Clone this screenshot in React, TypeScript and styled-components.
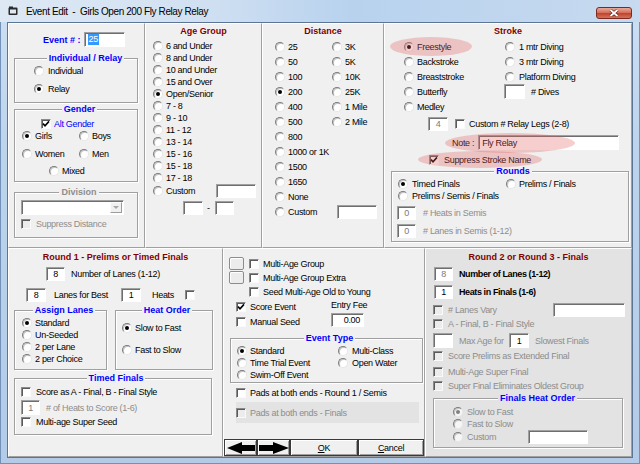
import React from "react";
import styled, { createGlobalStyle } from "styled-components";

const GlobalStyle = createGlobalStyle`
  html, body { margin: 0; padding: 0; background: #fff; }
  #root { width: 640px; height: 464px; }
`;

const FACE = "#f0f0f0";
const MUTED = "#8d8d8d";
const MAROON = "#800000";
const BLUE = "#0000ff";
const GREY_PANEL = "#e3e3e3";

const Shell = styled.div`
  width: 640px;
  height: 464px;
  box-sizing: border-box;
  display: flex;
  flex-direction: column;
  overflow: hidden;
  font-family: "Liberation Sans", Arial, sans-serif;
  font-size: 9px;
  letter-spacing: -0.3px;
  color: #000;
  background: linear-gradient(180deg, #cddff2 0%, #bcd3ec 35%, #b3cbe7 100%);
  box-shadow: inset 0 0 0 1px #7191b8;
`;

const TitleBar = styled.div`
  height: 22px;
  flex: none;
  display: flex;
  align-items: center;
  padding: 0 8px;
  background: linear-gradient(90deg, #dde8f4 0%, #d2e1f2 30%, #b8d2ee 55%, #c7daef 100%);
`;

const TitleText = styled.span`
  margin-left: 8px;
  font-size: 10px;
  letter-spacing: -0.4px;
  white-space: pre;
`;

const CloseButton = styled.div`
  margin-left: auto;
  align-self: flex-start;
  margin-top: 7px;
  width: 36px;
  height: 12px;
  box-sizing: border-box;
  border: 1px solid #7a2a20;
  border-radius: 3px;
  background: linear-gradient(180deg, #eaa99b 0%, #d5725d 45%, #c3442d 55%, #d3735b 100%);
  display: flex;
  align-items: center;
  justify-content: center;
`;

const FrameBody = styled.div`
  flex: 1;
  min-height: 0;
  display: flex;
  padding: 0 7px 6px;
`;

const Client = styled.div`
  flex: 1;
  min-width: 0;
  display: grid;
  grid-template-rows: 225px 1fr;
  border: 1px solid #5b7596;
  background: ${FACE};
`;

const Row = styled.div<{ $cols: string }>`
  display: grid;
  grid-template-columns: ${(p) => p.$cols};
  min-height: 0;
`;

const Panel = styled.div<{ $bg?: string }>`
  position: relative;
  box-sizing: border-box;
  min-width: 0;
  overflow: hidden;
  display: flex;
  flex-direction: column;
  border: 1px solid;
  border-color: #fff #a0a0a0 #a0a0a0 #fff;
  background: ${(p) => p.$bg ?? FACE};
`;

const PanelTitle = styled.div<{ $mt: number; $mb?: number }>`
  flex: none;
  height: 10px;
  line-height: 10px;
  margin: ${(p) => p.$mt}px 0 ${(p) => p.$mb ?? 0}px;
  text-align: center;
  font-weight: bold;
  letter-spacing: 0;
  color: ${MAROON};
`;

const GroupBox = styled.fieldset<{ $m: string; $p: string; $w?: number }>`
  flex: none;
  box-sizing: border-box;
  min-width: 0;
  width: ${(p) => (p.$w ? `${p.$w}px` : "auto")};
  margin: ${(p) => p.$m};
  padding: ${(p) => p.$p};
  border: 1px solid #a0a0a0;
  box-shadow: inset 1px 1px 0 #fff, 1px 1px 0 #fff;
`;

const Legend = styled.legend<{ $color?: string; $bg?: string }>`
  margin: 0 auto;
  padding: 0 2px;
  line-height: 10px;
  font-weight: bold;
  letter-spacing: 0;
  color: ${(p) => p.$color ?? BLUE};
  background: ${(p) => p.$bg ?? FACE};
`;

const Line = styled.div<{ $mt?: number; $pl?: number; $pr?: number; $h?: number; $gap?: number }>`
  flex: none;
  display: flex;
  align-items: center;
  white-space: nowrap;
  height: ${(p) => p.$h ?? 12}px;
  margin-top: ${(p) => p.$mt ?? 0}px;
  padding: 0 ${(p) => p.$pr ?? 0}px 0 ${(p) => p.$pl ?? 0}px;
  gap: ${(p) => p.$gap ?? 0}px;
`;

const Cols = styled.div<{ $cols: string; $rows?: number; $mt?: number; $pl?: number }>`
  flex: none;
  display: grid;
  grid-template-columns: ${(p) => p.$cols};
  grid-auto-rows: ${(p) => p.$rows ?? 12}px;
  align-items: center;
  white-space: nowrap;
  margin-top: ${(p) => p.$mt ?? 0}px;
  padding-left: ${(p) => p.$pl ?? 0}px;
`;

const Stack = styled.div<{ $gap?: number; $pl?: number; $pr?: number; $mt?: number; $row?: number }>`
  display: flex;
  flex-direction: column;
  gap: ${(p) => p.$gap ?? 0}px;
  margin-top: ${(p) => p.$mt ?? 0}px;
  padding: 0 ${(p) => p.$pr ?? 0}px 0 ${(p) => p.$pl ?? 0}px;

  & > * {
    height: ${(p) => (p.$row ? `${p.$row}px` : "auto")};
  }
`;

const Opt = styled.div<{ $gap: number; $color?: string; $off?: boolean }>`
  display: flex;
  align-items: center;
  height: 12px;
  gap: ${(p) => p.$gap}px;
  white-space: nowrap;
  color: ${(p) => (p.$off ? MUTED : p.$color ?? "inherit")};
`;

const RadioMark = styled.span<{ $on?: boolean; $off?: boolean }>`
  flex: none;
  width: 10px;
  height: 10px;
  box-sizing: border-box;
  border-radius: 50%;
  border: 1px solid;
  border-color: #7c7c7c #e6e6e6 #e6e6e6 #7c7c7c;
  box-shadow: inset 1px 1px 0 #c4c4c4;
  background: ${(p) => (p.$off ? "#f6f6f6" : "#fff")};
  display: flex;
  align-items: center;
  justify-content: center;

  &::after {
    content: "";
    display: ${(p) => (p.$on ? "block" : "none")};
    width: 4px;
    height: 4px;
    border-radius: 50%;
    background: ${(p) => (p.$off ? "#808080" : "#000")};
  }
`;

const CheckMark = styled.span<{ $off?: boolean }>`
  flex: none;
  width: 10px;
  height: 10px;
  box-sizing: border-box;
  border: 1px solid;
  border-color: #8a8a8a #fafafa #fafafa #8a8a8a;
  box-shadow: inset 1px 1px 0 #5a5a5a;
  background: ${(p) => (p.$off ? "#ececec" : "#fff")};
  display: flex;
  align-items: center;
  justify-content: center;
`;

const TextBox = styled.div<{ $w: number; $h?: number; $align?: string; $off?: boolean; $mt?: number; $ml?: number }>`
  flex: none;
  box-sizing: border-box;
  width: ${(p) => p.$w}px;
  height: ${(p) => p.$h ?? 14}px;
  margin: ${(p) => p.$mt ?? 0}px 0 0 ${(p) => p.$ml ?? 0}px;
  padding: 0 3px;
  display: flex;
  align-items: center;
  justify-content: ${(p) => p.$align ?? "center"};
  background: #fff;
  border: 1px solid;
  border-color: #a0a0a0 #fff #fff #a0a0a0;
  box-shadow: inset 1px 1px 0 #6e6e6e;
  color: ${(p) => (p.$off ? "#7a7a7a" : "#000")};
  white-space: nowrap;
`;

const Selected = styled.span`
  background: #3399ff;
  color: #fff;
  line-height: 11px;
  padding: 0 1px;
`;

const EventLabel = styled.span`
  font-weight: bold;
  letter-spacing: 0;
  color: ${BLUE};
`;

const Muted = styled.span`
  color: ${MUTED};
`;

const Strong = styled.span`
  font-weight: bold;
  letter-spacing: -0.4px;
`;

const Fill = styled.div`
  flex: 1;
`;

const Combo = styled.div`
  flex: none;
  box-sizing: border-box;
  width: 103px;
  height: 15px;
  padding: 1px;
  display: flex;
  justify-content: flex-end;
  background: #fff;
  border: 1px solid;
  border-color: #a0a0a0 #fff #fff #a0a0a0;
  box-shadow: inset 1px 1px 0 #6e6e6e;
`;

const ComboArrow = styled.div`
  width: 12px;
  box-sizing: border-box;
  background: ${FACE};
  border: 1px solid;
  border-color: #fbfbfb #9c9c9c #9c9c9c #fbfbfb;
  display: flex;
  align-items: center;
  justify-content: center;

  &::after {
    content: "";
    border-left: 3px solid transparent;
    border-right: 3px solid transparent;
    border-top: 3px solid #a6a6a6;
  }
`;

const GroupPair = styled.div`
  flex: none;
  display: flex;
  gap: 8px;
  margin: 3px 0 0 5px;
`;

const SquareButton = styled.span`
  flex: none;
  width: 15px;
  height: 13px;
  box-sizing: border-box;
  border: 1px solid #8c8c8c;
  border-radius: 2px;
  background: #ececec;
  box-shadow: inset 1px 1px 0 #fff;
`;

const FeeBlock = styled.div`
  flex: none;
  display: flex;
  margin-top: 2px;
  padding-left: 12px;
`;

const FeeChecks = styled.div`
  width: 95px;
  display: flex;
  flex-direction: column;
  gap: 3px;
  padding-top: 1px;
`;

const FeeColumn = styled.div`
  display: flex;
  flex-direction: column;
  line-height: 10px;
`;

const DisabledStrip = styled.div`
  flex: none;
  width: 183px;
  height: 21px;
  margin: 3px 0 0 12px;
  display: flex;
  align-items: center;
  background: ${GREY_PANEL};
`;

const ButtonBar = styled.div`
  flex: none;
  margin-top: auto;
  height: 17px;
  display: flex;
`;

const DlgButton = styled.div<{ $w: number }>`
  flex: none;
  box-sizing: border-box;
  width: ${(p) => p.$w}px;
  height: 17px;
  display: flex;
  align-items: center;
  justify-content: center;
  background: ${FACE};
  border: 1px solid #3a3a3a;
  box-shadow: inset 1px 1px 0 #fff, inset -1px -1px 0 #a0a0a0;

  u {
    text-decoration: underline;
  }
`;

const Highlight = styled.div<{ $x: number; $y: number; $w: number; $h: number }>`
  position: absolute;
  left: ${(p) => p.$x}px;
  top: ${(p) => p.$y}px;
  width: ${(p) => p.$w}px;
  height: ${(p) => p.$h}px;
  border-radius: 50%;
  background: rgba(228, 92, 92, 0.3);
  pointer-events: none;
`;

type OptProps = {
  label?: React.ReactNode;
  on?: boolean;
  off?: boolean;
  gap?: number;
  color?: string;
};

const Radio = ({ label, on, off, gap = 3 }: OptProps) => (
  <Opt $gap={gap} $off={off}>
    <RadioMark $on={on} $off={off} />
    {label && <span>{label}</span>}
  </Opt>
);

const Check = ({ label, on, off, gap = 4, color }: OptProps) => (
  <Opt $gap={gap} $off={off} $color={color}>
    <CheckMark $off={off}>
      {on && (
        <svg width="8" height="8" viewBox="0 0 8 8">
          <path d="M1 3.6 L3 5.8 L7 1.4" fill="none" stroke="#000" strokeWidth="1.6" />
        </svg>
      )}
    </CheckMark>
    {label && <span>{label}</span>}
  </Opt>
);

const ageGroups = [
  "6 and Under",
  "8 and Under",
  "10 and Under",
  "15 and Over",
  "Open/Senior",
  "7 - 8",
  "9 - 10",
  "11 - 12",
  "13 - 14",
  "15 - 16",
  "15 - 18",
  "17 - 18",
];

const distances: [string, string | null][] = [
  ["25", "3K"],
  ["50", "5K"],
  ["100", "10K"],
  ["200", "25K"],
  ["400", "1 Mile"],
  ["500", "2 Mile"],
  ["800", null],
  ["1000 or 1K", null],
  ["1500", null],
  ["1650", null],
  ["None", null],
];

const AppIcon = () => (
  <svg width="10" height="10" viewBox="0 0 10 10">
    <rect x="0.5" y="1.5" width="9" height="7.5" rx="1" fill="#2b2b2b" />
    <rect x="2" y="3.5" width="6" height="4" fill="#dfe9f3" />
    <rect x="1" y="0.5" width="4" height="2" fill="#2b2b2b" />
  </svg>
);

const ArrowLeft = () => (
  <svg width="28" height="12" viewBox="0 0 28 12">
    <path d="M0 6 L15 0 V3 H28 V9 H15 V12 Z" fill="#000" />
  </svg>
);

const ArrowRight = () => (
  <svg width="30" height="12" viewBox="0 0 30 12">
    <path d="M30 6 L14 0 V3 H0 V9 H14 V12 Z" fill="#000" />
  </svg>
);

export default function App() {
  return (
    <>
      <GlobalStyle />
      <Shell>
        <TitleBar>
          <AppIcon />
          <TitleText>Event Edit  -  Girls Open 200 Fly Relay Relay</TitleText>
          <CloseButton>
            <svg width="10" height="8" viewBox="0 0 10 8">
              <path d="M1.5 1 L8.5 7 M8.5 1 L1.5 7" stroke="#5a1a12" strokeWidth="3" />
              <path d="M1.5 1 L8.5 7 M8.5 1 L1.5 7" stroke="#fff" strokeWidth="1.8" />
            </svg>
          </CloseButton>
        </TitleBar>

        <FrameBody>
          <Client>
            <Row $cols="137px 117px 122px 1fr">
              {/* event number, relay, gender, division */}
              <Panel>
                <Line $mt={8} $h={15} $pl={34} $gap={3}>
                  <EventLabel>Event # :</EventLabel>
                  <TextBox $w={41} $h={15} $align="flex-start">
                    <Selected>25</Selected>
                  </TextBox>
                </Line>

                <GroupBox $m="6px 6px 0 5px" $p="2px 0 7px 19px">
                  <Legend>Individual / Relay</Legend>
                  <Stack $gap={6}>
                    <Radio label="Individual" gap={4} />
                    <Radio label="Relay" on gap={4} />
                  </Stack>
                </GroupBox>

                <GroupBox $m="1px 6px 0 5px" $p="4px 0 4px 7px">
                  <Legend>Gender</Legend>
                  <Line $pl={19}>
                    <Check label="Alt Gender" on gap={3} color={BLUE} />
                  </Line>
                  <Cols $cols="57px 1fr">
                    <Radio label="Girls" on />
                    <Radio label="Boys" />
                  </Cols>
                  <Cols $cols="57px 1fr" $mt={6}>
                    <Radio label="Women" />
                    <Radio label="Men" />
                  </Cols>
                  <Line $mt={5} $pl={27}>
                    <Radio label="Mixed" />
                  </Line>
                </GroupBox>

                <GroupBox $m="5px 6px 0 5px" $p="3px 0 7px 6px">
                  <Legend $color={MUTED}>Division</Legend>
                  <Combo>
                    <ComboArrow />
                  </Combo>
                  <Line $mt={3}>
                    <Check label="Suppress Distance" off gap={5} />
                  </Line>
                </GroupBox>
              </Panel>

              {/* age group */}
              <Panel>
                <PanelTitle $mt={2} $mb={4}>
                  Age Group
                </PanelTitle>
                <Stack $pl={7} $pr={5} $row={13.667}>
                  {ageGroups.map((g) => (
                    <Radio key={g} label={g} on={g === "Open/Senior"} />
                  ))}
                  <Line>
                    <Radio label="Custom" />
                    <Fill />
                    <TextBox $w={40} />
                  </Line>
                </Stack>
                <Line $mt={3} $h={14} $pl={37} $gap={4}>
                  <TextBox $w={20} />
                  <span>-</span>
                  <TextBox $w={19} $ml={1} />
                </Line>
              </Panel>

              {/* distance */}
              <Panel>
                <PanelTitle $mt={2} $mb={3}>
                  Distance
                </PanelTitle>
                <Cols $cols="57px 57px" $rows={15} $pl={12}>
                  {distances.map(([a, b]) => (
                    <React.Fragment key={a}>
                      <Radio label={a} on={a === "200"} />
                      {b ? <Radio label={b} /> : <span />}
                    </React.Fragment>
                  ))}
                  <Radio label="Custom" />
                  <TextBox $w={40} $ml={5} />
                </Cols>
              </Panel>

              {/* stroke */}
              <Panel>
                <PanelTitle $mt={2} $mb={3}>
                  Stroke
                </PanelTitle>
                <Cols $cols="101px 1fr" $rows={15} $pl={19}>
                  <Radio label="Freestyle" on />
                  <Radio label="1 mtr Diving" gap={4} />
                  <Radio label="Backstroke" />
                  <Radio label="3 mtr Diving" gap={4} />
                  <Radio label="Breaststroke" />
                  <Radio label="Platform Diving" gap={4} />
                  <Radio label="Butterfly" />
                  <Line $h={15} $gap={6}>
                    <TextBox $w={21} $h={15} $ml={-1} />
                    <span># Dives</span>
                  </Line>
                  <Radio label="Medley" />
                  <span />
                </Cols>
                <Line $mt={3} $h={14} $pl={43} $gap={7}>
                  <TextBox $w={20} $off>
                    4
                  </TextBox>
                  <Check label="Custom # Relay Legs (2-8)" />
                </Line>
                <Line $mt={4} $h={15} $pl={67} $gap={4}>
                  <span>Note :</span>
                  <TextBox $w={141} $h={15} $align="flex-start">
                    Fly Relay
                  </TextBox>
                </Line>
                <Line $mt={4} $pl={44}>
                  <Check label="Suppress Stroke Name" on gap={5} />
                </Line>
                <GroupBox $m="0 2px 0 6px" $p="2px 0 3px 6px">
                  <Legend>Rounds</Legend>
                  <Cols $cols="108px 1fr">
                    <Radio label="Timed Finals" on gap={4} />
                    <Radio label="Prelims / Finals" gap={3} />
                    <Radio label="Prelims / Semis / Finals" gap={4} />
                    <span />
                  </Cols>
                  <Line $mt={4} $h={14} $gap={7}>
                    <TextBox $w={19} $ml={-1} $off>
                      0
                    </TextBox>
                    <Muted># Heats in Semis</Muted>
                  </Line>
                  <Line $mt={4} $h={14} $gap={7}>
                    <TextBox $w={19} $ml={-1} $off>
                      0
                    </TextBox>
                    <Muted># Lanes in Semis (1-12)</Muted>
                  </Line>
                </GroupBox>

                <Highlight $x={5} $y={13} $w={82} $h={19} />
                <Highlight $x={60} $y={109} $w={130} $h={20} />
                <Highlight $x={33} $y={127} $w={124} $h={17} />
              </Panel>
            </Row>

            <Row $cols="215px 202px 1fr">
              {/* round 1 */}
              <Panel>
                <PanelTitle $mt={3}>Round 1 - Prelims or Timed Finals</PanelTitle>
                <Line $mt={5} $h={14} $pl={37} $gap={6}>
                  <TextBox $w={19}>8</TextBox>
                  <span>Number of Lanes (1-12)</span>
                </Line>
                <Cols $cols="28px 67px 31px 33px auto" $rows={14} $mt={7} $pl={17}>
                  <TextBox $w={20}>8</TextBox>
                  <span>Lanes for Best</span>
                  <TextBox $w={20}>1</TextBox>
                  <span>Heats</span>
                  <Check />
                </Cols>
                <GroupPair>
                  <GroupBox $w={93} $m="0" $p="2px 0 4px 7px">
                    <Legend>Assign Lanes</Legend>
                    <Stack>
                      <Radio label="Standard" on />
                      <Radio label="Un-Seeded" />
                      <Radio label="2 per Lane" />
                      <Radio label="2 per Choice" />
                    </Stack>
                  </GroupBox>
                  <GroupBox $w={98} $m="0" $p="7px 0 0 6px">
                    <Legend>Heat Order</Legend>
                    <Stack $gap={10}>
                      <Radio label="Slow to Fast" on />
                      <Radio label="Fast to Slow" />
                    </Stack>
                  </GroupBox>
                </GroupPair>
                <GroupBox $w={198} $m="3px 0 0 5px" $p="3px 0 6px 6px">
                  <Legend>Timed Finals</Legend>
                  <Check label="Score as A - Final, B - Final Style" gap={5} />
                  <Line $mt={2} $h={15} $gap={6}>
                    <TextBox $w={19} $h={15} $off>
                      1
                    </TextBox>
                    <Muted># of Heats to Score (1-6)</Muted>
                  </Line>
                  <Line $mt={1}>
                    <Check label="Multi-age Super Seed" gap={5} />
                  </Line>
                </GroupBox>
              </Panel>

              {/* options */}
              <Panel>
                <Line $mt={8} $h={13} $pl={5} $gap={5}>
                  <SquareButton />
                  <Check label="Multi-Age Group" />
                </Line>
                <Line $mt={1} $h={13} $pl={5} $gap={5}>
                  <SquareButton />
                  <Check label="Multi-Age Group Extra" />
                </Line>
                <Line $mt={2} $pl={25}>
                  <Check label="Seed Multi-Age Old to Young" />
                </Line>
                <FeeBlock>
                  <FeeChecks>
                    <Check label="Score Event" on />
                    <Check label="Manual Seed" />
                  </FeeChecks>
                  <FeeColumn>
                    <span>Entry Fee</span>
                    <TextBox $w={33} $mt={3} $align="flex-end">
                      0.00
                    </TextBox>
                  </FeeColumn>
                </FeeBlock>
                <GroupBox $m="5px 1px 0 6px" $p="2px 0 1px 6px">
                  <Legend>Event Type</Legend>
                  <Cols $cols="101px 1fr">
                    <Radio label="Standard" on />
                    <Radio label="Multi-Class" gap={4} />
                    <Radio label="Time Trial Event" />
                    <Radio label="Open Water" gap={4} />
                    <Radio label="Swim-Off Event" />
                  </Cols>
                </GroupBox>
                <Line $mt={4} $pl={12}>
                  <Check label="Pads at both ends - Round 1 / Semis" />
                </Line>
                <DisabledStrip>
                  <Check label="Pads at both ends - Finals" off />
                </DisabledStrip>
                <ButtonBar>
                  <DlgButton $w={33}>
                    <ArrowLeft />
                  </DlgButton>
                  <DlgButton $w={33}>
                    <ArrowRight />
                  </DlgButton>
                  <DlgButton $w={68}>
                    <span>
                      <u>O</u>K
                    </span>
                  </DlgButton>
                  <DlgButton $w={66}>
                    <span>
                      <u>C</u>ancel
                    </span>
                  </DlgButton>
                </ButtonBar>
              </Panel>

              {/* round 2 / 3 */}
              <Panel $bg={GREY_PANEL}>
                <PanelTitle $mt={3}>Round 2 or Round 3 - Finals</PanelTitle>
                <Line $mt={5} $h={14} $pl={8} $gap={6}>
                  <TextBox $w={19} $off>
                    8
                  </TextBox>
                  <Strong>Number of Lanes (1-12)</Strong>
                </Line>
                <Line $mt={4} $h={14} $pl={8} $gap={6}>
                  <TextBox $w={19}>1</TextBox>
                  <Strong>Heats in Finals (1-6)</Strong>
                </Line>
                <Line $mt={4} $h={14} $pl={7} $pr={6}>
                  <Check label="# Lanes Vary" off gap={5} />
                  <Fill />
                  <TextBox $w={72} />
                </Line>
                <Line $mt={1} $pl={7}>
                  <Check label="A - Final, B - Final Style" off gap={5} />
                </Line>
                <Cols $cols="26px 50px 26px auto" $rows={15} $mt={3} $pl={7}>
                  <TextBox $w={20} $h={15} />
                  <Muted>Max Age for</Muted>
                  <TextBox $w={20} $h={15}>
                    1
                  </TextBox>
                  <Muted>Slowest Finals</Muted>
                </Cols>
                <Line $mt={2} $pl={7}>
                  <Check label="Score Prelims as Extended Final" off gap={5} />
                </Line>
                <Line $mt={4} $pl={7}>
                  <Check label="Multi-Age Super Final" off gap={5} />
                </Line>
                <Line $mt={2} $pl={7}>
                  <Check label="Super Final Eliminates Oldest Group" off gap={5} />
                </Line>
                <GroupBox $w={190} $m="1px 0 0 7px" $p="3px 0 3px 19px">
                  <Legend $bg={GREY_PANEL}>Finals Heat Order</Legend>
                  <Radio label="Slow to Fast" on off gap={4} />
                  <Radio label="Fast to Slow" off gap={4} />
                  <Cols $cols="75px auto" $rows={14}>
                    <Radio label="Custom" off gap={4} />
                    <TextBox $w={60} />
                  </Cols>
                </GroupBox>
              </Panel>
            </Row>
          </Client>
        </FrameBody>
      </Shell>
    </>
  );
}
